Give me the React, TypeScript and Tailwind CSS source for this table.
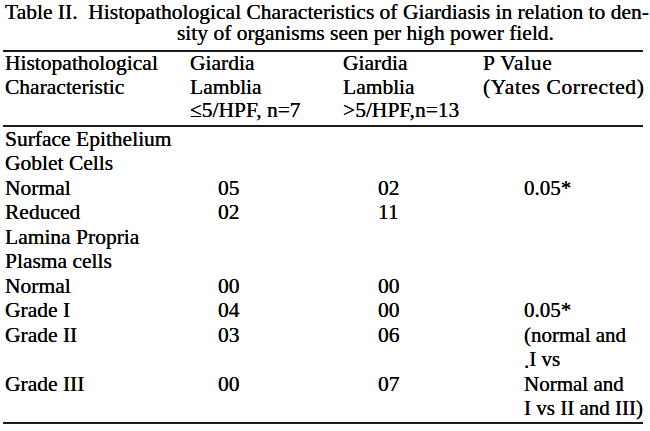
import React from "react";

const rows: [string, string, string, React.ReactNode][] = [
  ["Surface Epithelium", "", "", ""],
  ["Goblet Cells", "", "", ""],
  ["Normal", "05", "02", "0.05*"],
  ["Reduced", "02", "11", ""],
  ["Lamina Propria", "", "", ""],
  ["Plasma cells", "", "", ""],
  ["Normal", "00", "00", ""],
  ["Grade I", "04", "00", "0.05*"],
  ["Grade II", "03", "06", "(normal and"],
  ["", "", "", <span key="d"><span className="relative top-[2px]">.</span>I vs</span>],
  ["Grade III", "00", "07", "Normal and"],
  ["", "", "", "I vs II and III)"],
];

export default function App() {
  return (
    <div className="w-[650px] h-[431px] bg-white text-black font-['Liberation_Serif',serif] overflow-hidden [text-shadow:0_0_0.5px_#000]">
      <div className="pt-[2px] pl-[5px] text-[21.5px] leading-[21px] whitespace-nowrap">
        <div>Table II.&nbsp; Histopathological Characteristics of Giardiasis in relation to den-</div>
        <div className="pl-[172px]">sity of organisms seen per high power field.</div>
      </div>
      <div className="mt-[6px] mx-[3px] w-[640px] h-[2px] bg-[#1a1a1a]" />
      <div className="pl-[5px] grid grid-cols-[185px_155px_138px_1fr] text-[21.5px] leading-[23.5px] whitespace-nowrap">
        <div>
          <div>Histopathological</div>
          <div>Characteristic</div>
        </div>
        <div>
          <div>Giardia</div>
          <div>Lamblia</div>
          <div>≤5/HPF, n=7</div>
        </div>
        <div className="-ml-[2px]">
          <div>Giardia</div>
          <div>Lamblia</div>
          <div>&gt;5/HPF,n=13</div>
        </div>
        <div className="tracking-[0.6px]">
          <div>P Value</div>
          <div>(Yates Corrected)</div>
        </div>
      </div>
      <div className="mt-[2px] mx-[3px] w-[640px] h-[2px] bg-[#1a1a1a]" />
      <div className="pl-[5px] text-[21.5px] leading-[24.5px] whitespace-nowrap">
        {rows.map((r, i) => (
          <div key={i} className="grid grid-cols-[213px_160px_146px_1fr] h-[24.5px]">
            <div>{r[0]}</div>
            <div>{r[1]}</div>
            <div>{r[2]}</div>
            <div className="text-[21px]">{r[3]}</div>
          </div>
        ))}
      </div>
      <div className="mt-[1px] mx-[3px] w-[640px] h-[2px] bg-[#1a1a1a]" />
    </div>
  );
}
